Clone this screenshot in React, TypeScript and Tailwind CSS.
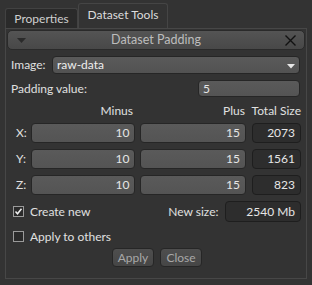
import React from "react";

const inputCls =
  "h-[20px] rounded-[4px] border border-[#262626] bg-gradient-to-b from-[#5a5a5a] to-[#545454] text-[#e6e6e6] flex items-center";

function Row({ label, minus, plus, total }: { label: string; minus: string; plus: string; total: string }) {
  return (
    <div className="flex items-center h-[20px]">
      <div className="w-[20px] pl-[5px] text-[#e0e0e0]">{label}</div>
      <div className={`${inputCls} w-[107px] justify-end pr-[5px]`}>{minus}</div>
      <div className={`${inputCls} w-[108px] ml-[5px] justify-end pr-[5px]`}>{plus}</div>
      <div className="h-[20px] w-[50px] ml-[6px] rounded-[4px] border border-[#1e1e1e] bg-[#2d2d2d] text-[#e6e6e6] flex items-center justify-end pr-[5px]">
        {total}
      </div>
    </div>
  );
}

function Check({ checked }: { checked: boolean }) {
  return (
    <div className="w-[11px] h-[11px] border border-[#9a9a9a] bg-[#2a2a2a] flex items-center justify-center">
      {checked && (
        <svg width="9" height="9" viewBox="0 0 9 9">
          <path d="M1.5 4.5 L3.5 6.8 L7.5 1.8" stroke="#f0f0f0" strokeWidth="1.5" fill="none" />
        </svg>
      )}
    </div>
  );
}

export default function App() {
  return (
    <div
      className="w-[312px] h-[285px] bg-[#333333] text-[12px] leading-none overflow-hidden"
      style={{ fontFamily: "Lato, 'Liberation Sans', sans-serif" }}
    >
      {/* tabs */}
      <div className="flex items-end h-[28px] pl-[5px]">
        <div className="w-[73px] h-[20px] bg-[#2a2a2a] border border-b-0 border-[#424242] rounded-t-[3px] flex items-center justify-center text-[#cfcfcf]">
          Properties
        </div>
        <div className="w-[90px] h-[25px] bg-[#333333] border border-b-0 border-[#454545] rounded-t-[3px] flex items-center justify-center text-[#dcdcdc] pb-[2px]">
          Dataset Tools
        </div>
      </div>
      {/* frame */}
      <div className="ml-[5px] w-[302px] h-[251px] border border-[#474747] px-[1px] pt-[1px]">
        <div className="h-[20px] rounded-[5px] border border-[#2a2a2a] bg-gradient-to-b from-[#545454] to-[#484848] flex items-center relative">
          <svg className="absolute left-[9px] top-[7px]" width="9" height="5" viewBox="0 0 9 5">
            <path d="M0 0 L9 0 L4.5 5 Z" fill="#2a2a2a" />
          </svg>
          <div className="flex-1 text-center text-[#bdbdbd] text-[12.5px]">Dataset Padding</div>
          <svg className="absolute right-[8px] top-[4px]" width="11" height="11" viewBox="0 0 11 11">
            <path d="M0.5 0.5 L10.5 10.5 M10.5 0.5 L0.5 10.5" stroke="#111" strokeWidth="1.4" />
          </svg>
        </div>

        <div className="px-[4px]">
          {/* Image */}
          <div className="flex items-center mt-[6px] h-[18px]">
            <div className="w-[41px] text-[#e0e0e0]">Image:</div>
            <div className="w-[248px] h-[18px] rounded-[4px] border border-[#262626] bg-gradient-to-b from-[#5a5a5a] to-[#525252] flex items-center pl-[4px] relative text-[#eeeeee]">
              raw-data
              <svg className="absolute right-[4px] top-[7px]" width="8" height="5" viewBox="0 0 8 5">
                <path d="M0 0 L8 0 L4 4.5 Z" fill="#e8e8e8" />
              </svg>
            </div>
          </div>

          {/* Padding value */}
          <div className="flex items-center mt-[6px] h-[17px]">
            <div className="w-[187px] text-[#e0e0e0]">Padding value:</div>
            <div className="w-[102px] h-[17px] rounded-[4px] border border-[#262626] bg-gradient-to-b from-[#5a5a5a] to-[#545454] flex items-center pl-[4px] text-[#e6e6e6]">
              5
            </div>
          </div>

          {/* header */}
          <div className="flex items-center mt-[7px] h-[14px] text-[#e0e0e0]">
            <div className="w-[122px] text-right">Minus</div>
            <div className="w-[112px] text-right">Plus</div>
            <div className="w-[56px] text-right">Total Size</div>
          </div>

          <div className="mt-[5px] flex flex-col gap-[6px]">
            <Row label="X:" minus="10" plus="15" total="2073" />
            <Row label="Y:" minus="10" plus="15" total="1561" />
            <Row label="Z:" minus="10" plus="15" total="823" />
          </div>

          {/* create new */}
          <div className="flex items-center mt-[6px] h-[21px]">
            <div className="pl-[2px]">
              <Check checked />
            </div>
            <div className="ml-[6px] w-[131px] text-[#e0e0e0]">Create new</div>
            <div className="w-[73px] text-right pr-[6px] text-[#e0e0e0]">New size:</div>
            <div className="w-[80px] h-[21px] rounded-[4px] border border-[#1e1e1e] bg-[#2d2d2d] text-[#e6e6e6] flex items-center justify-end pr-[5px]">
              2540 Mb
            </div>
          </div>

          {/* apply to others */}
          <div className="flex items-center mt-[9px] h-[11px]">
            <div className="pl-[2px]">
              <Check checked={false} />
            </div>
            <div className="ml-[6px] text-[#e0e0e0]">Apply to others</div>
          </div>

          {/* buttons */}
          <div className="flex mt-[6px] pl-[101px] gap-[6px]">
            <div className="w-[42px] h-[19px] rounded-[4px] border border-[#262626] bg-gradient-to-b from-[#4e4e4e] to-[#464646] flex items-center justify-center text-[#a8a8a8]">
              Apply
            </div>
            <div className="w-[42px] h-[19px] rounded-[4px] border border-[#262626] bg-gradient-to-b from-[#4e4e4e] to-[#464646] flex items-center justify-center text-[#a8a8a8]">
              Close
            </div>
          </div>
        </div>
      </div>
    </div>
  );
}
